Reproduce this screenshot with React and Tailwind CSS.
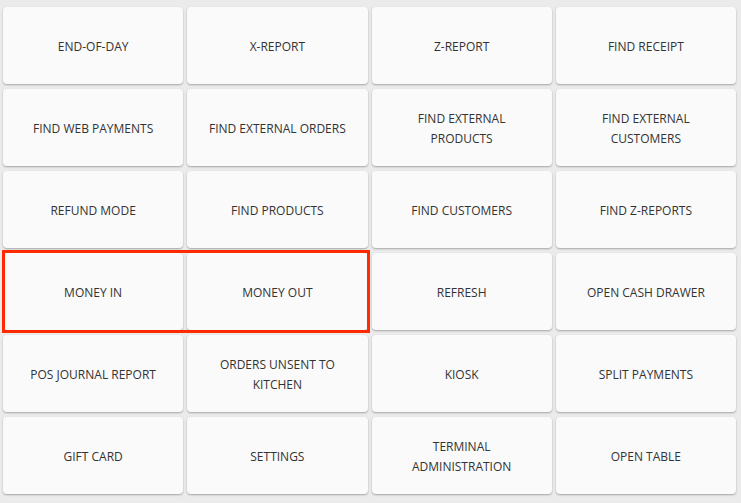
const items = [
  "END-OF-DAY",
  "X-REPORT",
  "Z-REPORT",
  "FIND RECEIPT",
  "FIND WEB PAYMENTS",
  "FIND EXTERNAL ORDERS",
  "FIND EXTERNAL PRODUCTS",
  "FIND EXTERNAL CUSTOMERS",
  "REFUND MODE",
  "FIND PRODUCTS",
  "FIND CUSTOMERS",
  "FIND Z-REPORTS",
  "MONEY IN",
  "MONEY OUT",
  "REFRESH",
  "OPEN CASH DRAWER",
  "POS JOURNAL REPORT",
  "ORDERS UNSENT TO KITCHEN",
  "KIOSK",
  "SPLIT PAYMENTS",
  "GIFT CARD",
  "SETTINGS",
  "TERMINAL ADMINISTRATION",
  "OPEN TABLE",
];

const Tile = ({ label }) => (
  <button className="flex items-center justify-center h-[77px] px-4 pt-[2px] bg-[#fafafa] rounded-[4px] shadow-[0_1px_2px_rgba(0,0,0,0.3)] text-[12px] leading-[20px] text-[#333] text-center">
    {label}
  </button>
);

export default function App() {
  const before = items.slice(0, 12);
  const highlighted = items.slice(12, 14);
  const after = items.slice(14);

  return (
    <div
      className="w-[741px] h-[503px] bg-[#ebebeb] overflow-hidden"
      style={{ fontFamily: '"Open Sans", "Noto Sans", sans-serif' }}
    >
      <div className="grid grid-cols-4 gap-x-[4px] gap-y-[5px] pl-[3px] pr-[5px] pt-[7px]">
        {before.map((label) => (
          <Tile key={label} label={label} />
        ))}

        {/* highlighted pair */}
        <div className="relative col-span-2 grid grid-cols-2 gap-x-[4px]">
          {highlighted.map((label) => (
            <Tile key={label} label={label} />
          ))}
          <div className="absolute -left-[1px] -right-[2px] -top-[3px] -bottom-[3px] border-[3px] border-[#ff2a00] pointer-events-none" />
        </div>

        {after.map((label) => (
          <Tile key={label} label={label} />
        ))}
      </div>
    </div>
  );
}
